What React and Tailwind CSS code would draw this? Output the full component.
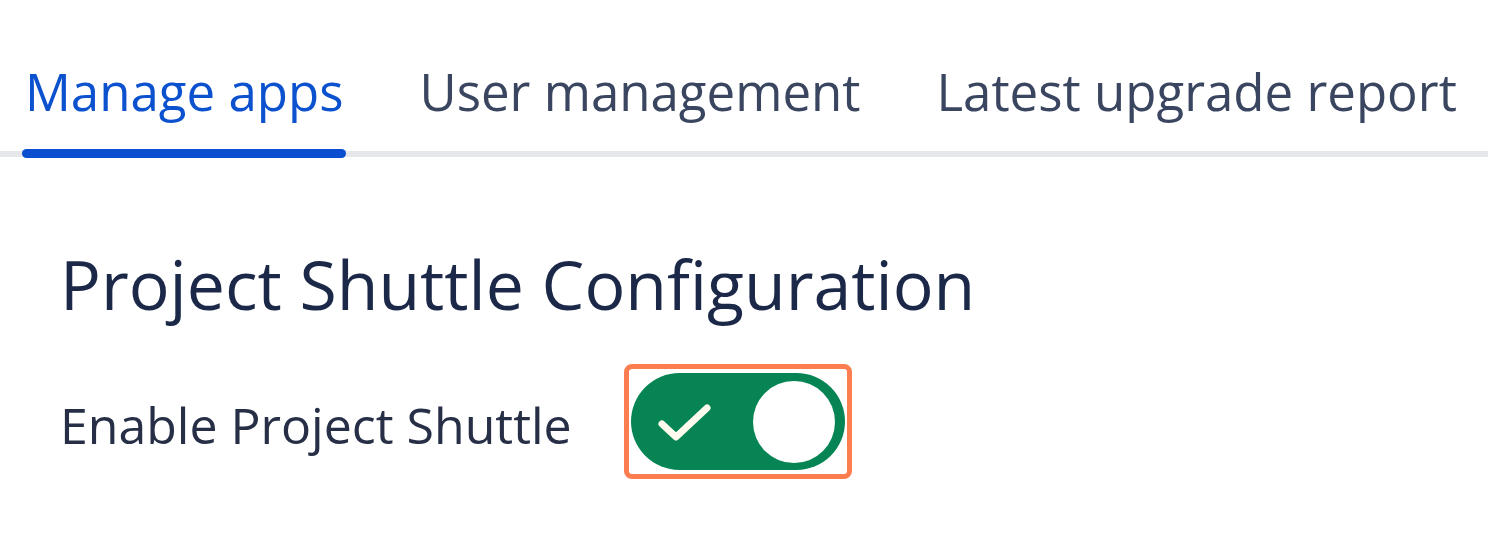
import React, { useState } from "react";

const tabs = ["Manage apps", "User management", "Latest upgrade report"];

const App = () => {
  const [active, setActive] = useState(0);
  const [enabled, setEnabled] = useState(true);

  return (
    <div
      className="w-[1488px] h-[537px] bg-white overflow-hidden text-[#172b4d]"
      style={{ fontFamily: '"Open Sans", "Noto Sans", sans-serif' }}
    >
      <div className="relative mt-[52px] flex gap-[70px] pl-[22px]">
        <div className="absolute left-0 right-0 bottom-[1px] h-[6px] bg-[#e6e7ea]" />
        {tabs.map((t, i) => (
          <button
            key={t}
            onClick={() => setActive(i)}
            className={`relative px-[3px] pb-[28px] text-[51px] leading-[78px] ${
              i === active ? "text-[#0c52cf]" : "text-[#3a4560]"
            }`}
          >
            {t}
            {i === active && (
              <span className="absolute left-0 right-0 bottom-0 h-[9px] rounded-full bg-[#0b4fd0]" />
            )}
          </button>
        ))}
      </div>

      <div className="pl-[60px] pt-[86px]">
        <h1 className="text-[68px] leading-[80px] text-[#1b2847]">
          Project Shuttle Configuration
        </h1>
        <div className="mt-[40px] flex items-center gap-[52px]">
          <span className="pt-[8px] text-[50px] text-[#262f46]">Enable Project Shuttle</span>
          <div className="rounded-[8px] border-[5px] border-[#fb7d50] px-[2px] py-[4px]">
            <button
              onClick={() => setEnabled(!enabled)}
              className={`flex h-[97px] w-[214px] items-center rounded-full pr-[10px] ${
                enabled ? "bg-[#068454] justify-between" : "bg-[#8993a4] justify-end"
              }`}
            >
              {enabled && (
                <svg width="56" height="42" viewBox="0 0 56 42" className="ml-[26px]">
                  <path
                    d="M5 23 L19 36 L50 7"
                    fill="none"
                    stroke="#fffbee"
                    strokeWidth="7"
                    strokeLinecap="round"
                    strokeLinejoin="round"
                  />
                </svg>
              )}
              <span className="h-[82px] w-[82px] rounded-full bg-white" />
            </button>
          </div>
        </div>
      </div>
    </div>
  );
};

export default App;
